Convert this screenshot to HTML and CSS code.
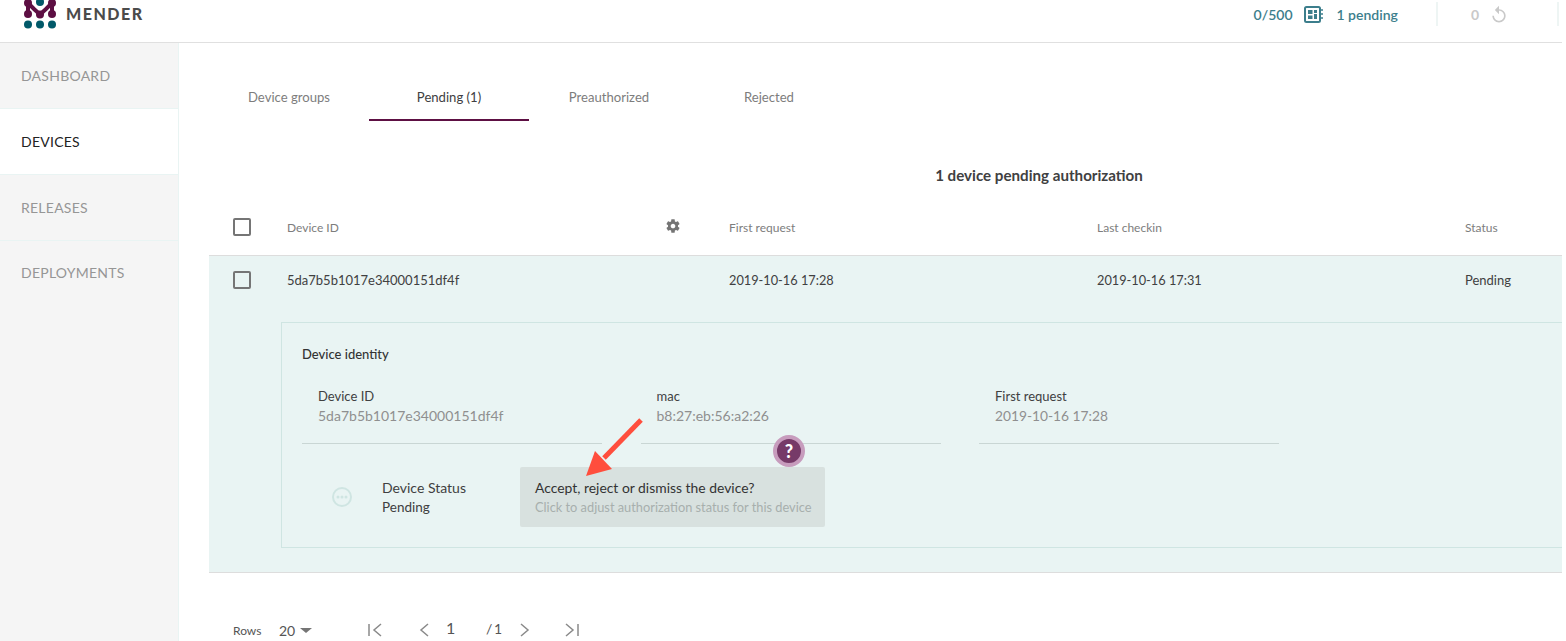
FILE: index.html
```html
<!DOCTYPE html>
<html lang="en">
<head>
<meta charset="utf-8">
<title>Mender - Devices</title>
<link rel="stylesheet" href="styles.css">
</head>
<body>
<div class="app">
  <header class="topbar">
    <div class="brand">
      <svg class="logo" width="34" height="30" viewBox="0 0 34 30">
        <circle cx="17" cy="2" r="4" fill="#015969"/>
        <circle cx="5" cy="24.5" r="4" fill="#015969"/>
        <circle cx="17" cy="24.5" r="4" fill="#015969"/>
        <circle cx="29" cy="24.5" r="4" fill="#015969"/>
        <path d="M5 3 L11 9 L17 14.5 L23 9 L29 3 M5 3 V14 M29 3 V14" fill="none" stroke="#5d0f43" stroke-width="4"/>
        <circle cx="5" cy="3" r="4" fill="#5d0f43"/>
        <circle cx="29" cy="3" r="4" fill="#5d0f43"/>
        <circle cx="5" cy="14" r="4" fill="#5d0f43"/>
        <circle cx="29" cy="14" r="4" fill="#5d0f43"/>
        <circle cx="17" cy="14.5" r="4" fill="#5d0f43"/>
      </svg>
      <span class="wordmark">MENDER</span>
    </div>
    <div class="status-bar">
      <span class="count">0/500</span>
      <svg class="chip" width="20" height="18" viewBox="0 0 20 18">
        <rect x="1" y="1" width="15" height="15" rx="1.5" fill="none" stroke="#3c7e8c" stroke-width="2"/>
        <path d="M4 4h4.5v4H4zM4 9.5h4.5V13H4zM10 4h3v3h-3zM10 8h3v5h-3z" fill="#3c7e8c"/>
        <path d="M17 4h2M17 8h2M17 12h2" stroke="#3c7e8c" stroke-width="1.4"/>
      </svg>
      <span class="pending-link">1 pending</span>
      <span class="vr vr-first"></span>
      <span class="zero">0</span>
      <svg class="replay" width="20" height="20" viewBox="0 0 24 24"><path fill="#c9c9c9" d="M12 5V1L7 6l5 5V7c3.31 0 6 2.69 6 6s-2.69 6-6 6-6-2.69-6-6H4c0 4.42 3.58 8 8 8s8-3.58 8-8-3.58-8-8-8z"/></svg>
      <span class="vr vr-last"></span>
    </div>
  </header>

  <div class="body-row">
    <nav class="sidebar">
      <a class="nav-item">Dashboard</a>
      <a class="nav-item active">Devices</a>
      <a class="nav-item">Releases</a>
      <a class="nav-item plain">Deployments</a>
    </nav>

    <main class="content">
      <div class="tabs">
        <span class="tab">Device groups</span>
        <span class="tab selected">Pending (1)</span>
        <span class="tab">Preauthorized</span>
        <span class="tab">Rejected</span>
      </div>

      <h2 class="summary">1 device pending authorization</h2>

      <div class="grid-row head-row">
        <span class="check"></span>
        <span class="cell id-cell">Device ID
          <svg class="gear" width="16" height="16" viewBox="0 0 24 24"><path fill="#757575" d="M19.43 12.98c.04-.32.07-.64.07-.98s-.03-.66-.07-.98l2.11-1.65c.19-.15.24-.42.12-.64l-2-3.46c-.12-.22-.39-.3-.61-.22l-2.49 1c-.52-.4-1.08-.73-1.69-.98l-.38-2.65C14.46 2.18 14.25 2 14 2h-4c-.25 0-.46.18-.49.42l-.38 2.65c-.61.25-1.17.59-1.69.98l-2.49-1c-.23-.09-.49 0-.61.22l-2 3.46c-.13.22-.07.49.12.64l2.11 1.65c-.04.32-.07.65-.07.98s.03.66.07.98l-2.11 1.65c-.19.15-.24.42-.12.64l2 3.46c.12.22.39.3.61.22l2.49-1c.52.4 1.08.73 1.69.98l.38 2.65c.03.24.24.42.49.42h4c.25 0 .46-.18.49-.42l.38-2.65c.61-.25 1.17-.59 1.69-.98l2.49 1c.23.09.49 0 .61-.22l2-3.46c.12-.22.07-.49-.12-.64l-2.11-1.65zM12 15.5c-1.93 0-3.5-1.57-3.5-3.5s1.57-3.5 3.5-3.5 3.5 1.57 3.5 3.5-1.57 3.5-3.5 3.5z"/></svg>
        </span>
        <span class="cell">First request</span>
        <span class="cell">Last checkin</span>
        <span class="cell">Status</span>
      </div>

      <section class="device">
        <div class="grid-row data-row">
          <span class="check"></span>
          <span class="cell">5da7b5b1017e34000151df4f</span>
          <span class="cell date">2019-10-16 17:28</span>
          <span class="cell date">2019-10-16 17:31</span>
          <span class="cell">Pending</span>
        </div>

        <div class="panel">
          <h3 class="panel-title">Device identity</h3>
          <div class="identity">
            <div class="field">
              <div class="field-key">Device ID</div>
              <div class="field-val">5da7b5b1017e34000151df4f</div>
            </div>
            <div class="field">
              <div class="field-key">mac</div>
              <div class="field-val">b8:27:eb:56:a2:26</div>
            </div>
            <div class="field">
              <div class="field-key">First request</div>
              <div class="field-val date-val">2019-10-16 17:28</div>
            </div>
          </div>
          <div class="status-row">
            <svg class="dots" width="22" height="22" viewBox="0 0 22 22">
              <circle cx="11" cy="11" r="9" fill="none" stroke="#cfe5e2" stroke-width="2"/>
              <circle cx="7" cy="11" r="1.5" fill="#cfe5e2"/>
              <circle cx="11" cy="11" r="1.5" fill="#cfe5e2"/>
              <circle cx="15" cy="11" r="1.5" fill="#cfe5e2"/>
            </svg>
            <div class="status-text">
              <div class="status-name">Device Status</div>
              <div>Pending</div>
            </div>
            <div class="action">
              <div class="action-main">Accept, reject or dismiss the device?</div>
              <div class="action-sub">Click to adjust authorization status for this device</div>
              <span class="help">?</span>
            </div>
          </div>
          <svg class="arrow" width="70" height="70" viewBox="0 0 70 70">
            <path d="M63 5 L26 43" stroke="#ff4e3d" stroke-width="5" fill="none"/>
            <path d="M8 61 L17 36 L34 54 Z" fill="#ff4e3d"/>
          </svg>
        </div>
      </section>

      <div class="pager">
        <span class="rows-label">Rows</span>
        <span class="rows-value">20</span>
        <span class="caret"></span>
        <svg class="pg pg-first" width="16" height="16" viewBox="0 0 16 16"><path d="M2 2v12M14 2L7 8l7 6" fill="none" stroke="#8a8a8a" stroke-width="1.5"/></svg>
        <svg class="pg pg-prev" width="12" height="16" viewBox="0 0 12 16"><path d="M10 2L3 8l7 6" fill="none" stroke="#8a8a8a" stroke-width="1.5"/></svg>
        <span class="page-now">1</span>
        <span class="page-total">/ 1</span>
        <svg class="pg pg-next" width="12" height="16" viewBox="0 0 12 16"><path d="M2 2l7 6-7 6" fill="none" stroke="#8a8a8a" stroke-width="1.5"/></svg>
        <svg class="pg pg-last" width="16" height="16" viewBox="0 0 16 16"><path d="M14 2v12M2 2l7 6-7 6" fill="none" stroke="#8a8a8a" stroke-width="1.5"/></svg>
      </div>
    </main>
  </div>
</div>
</body>
</html>
```

FILE: styles.css
```css
* { box-sizing: border-box; }
html, body { margin: 0; padding: 0; background: #fff; }
body { font-family: Lato, "Open Sans", sans-serif; color: #404041; overflow: hidden; }

.app { width: 1562px; height: 641px; overflow: hidden; }

.topbar {
  height: 43px;
  border-bottom: 1px solid #e0e0e0;
  display: flex;
  justify-content: space-between;
}
.brand { display: flex; align-items: flex-start; padding-left: 23px; }
.logo { display: block; }
.wordmark {
  margin-left: 9px;
  margin-top: 4px;
  font-size: 16px;
  line-height: 20px;
  font-weight: 900;
  letter-spacing: 1.5px;
  color: #4b4b4b;
}

.status-bar { display: flex; align-items: flex-start; font-size: 14px; line-height: 20px; padding-top: 2px; }
.count, .pending-link { color: #3c7e8c; font-weight: 600; margin-top: 3px; }
.chip { margin: 4px 0 0 11px; }
.pending-link { margin-left: 13px; }
.vr { width: 2px; height: 24px; background: #eef5f4; }
.vr-first { margin-left: 38px; }
.zero { margin: 3px 0 0 33px; color: #c9c9c9; font-weight: 700; }
.replay { margin: 3px 0 0 10px; }
.vr-last { margin-left: 48px; margin-right: 3px; }

.body-row { display: flex; height: 598px; }

.sidebar {
  width: 179px;
  flex: none;
  background: #f5f5f5;
  border-right: 1px solid #e9f4f3;
}
.nav-item {
  display: flex;
  align-items: center;
  height: 66px;
  padding-left: 21px;
  font-size: 14px;
  letter-spacing: .25px;
  text-transform: uppercase;
  color: #969696;
  border-bottom: 1px solid #e9f4f3;
}
.nav-item.active { background: #fff; color: #222; }
.nav-item.plain { border-bottom: 0; height: 62px; }

.content { flex: 1; min-width: 0; padding: 30px 0 0 30px; }

.tabs { display: flex; height: 48px; }
.tab {
  width: 160px;
  display: flex;
  align-items: center;
  justify-content: center;
  padding-top: 1px;
  font-size: 13.1px;
  color: #7d7d7d;
  border-bottom: 2px solid transparent;
}
.tab.selected { color: #404041; border-bottom-color: #5d0f43; }

.summary {
  margin: 44px 0 0;
  padding-left: 307px;
  width: 1353px;
  text-align: center;
  font-size: 15.15px;
  line-height: 20px;
  font-weight: 700;
  color: #404041;
}

.grid-row {
  display: grid;
  grid-template-columns: 78px 442px 368px 368px 97px;
  align-items: center;
}
.head-row {
  margin-top: 15px;
  height: 56px;
  border-bottom: 1px solid #ddd;
  font-size: 12px;
  color: #7d7d7d;
  padding-bottom: 1px;
}
.data-row { height: 47px; font-size: 13px; color: #404041; }
.date { font-size: 12.75px; }
.check {
  width: 18px;
  height: 18px;
  margin-left: 24px;
  border: 2px solid #757575;
  border-radius: 2px;
}
.id-cell { display: flex; justify-content: space-between; align-items: center; padding-right: 48px; }
.gear { display: block; margin-top: -2px; }

.device {
  background: #e9f4f3;
  height: 317px;
  border-bottom: 1px solid #ddd;
}

.panel {
  position: relative;
  margin: 19px 0 0 72px;
  height: 226px;
  width: 1290px;
  border: 1px solid #cfe5e2;
  border-right: 0;
  padding: 20px 0 0 20px;
}
.panel-title { margin: 0; font-size: 13px; line-height: 22px; font-weight: 500; color: #333; }

.identity { display: flex; gap: 38.5px; margin-top: 21px; }
.field {
  width: 300px;
  height: 58px;
  padding: 0 16px;
  border-bottom: 1px solid #c9d6d4;
  font-size: 14px;
  line-height: 20px;
}
.field-key { font-size: 13px; color: #404041; }
.field-val { color: #8f8f8f; font-size: 14px; }
.field-val.date-val { font-size: 13.75px; }

.status-row { display: flex; align-items: center; margin-top: 23px; height: 60px; padding-left: 29px; }
.dots { flex: none; }
.status-text { margin-left: 29px; width: 138px; padding-top: 1px; font-size: 13.5px; line-height: 19px; color: #404041; }
.status-name { font-size: 14px; margin-bottom: 1px; }

.action {
  position: relative;
  width: 305px;
  height: 60px;
  padding: 11px 0 0 15px;
  background: #d8e1df;
  border-radius: 2px;
  line-height: 19px;
}
.action-main { font-size: 13.9px; color: #333; margin-bottom: 1px; }
.action-sub { font-size: 12.8px; color: #a7afad; white-space: nowrap; }

.help {
  position: absolute;
  left: 253px;
  top: -32px;
  width: 32px;
  height: 32px;
  border-radius: 50%;
  border: 4px solid #c79cbd;
  background: #763a68;
  color: #fff;
  font-size: 18px;
  font-weight: 900;
  line-height: 24px;
  text-align: center;
}

.arrow { position: absolute; left: 296px; top: 92px; }

.pager { display: flex; align-items: center; height: 20px; margin-top: 47px; padding-left: 24px; color: #555; }
.rows-label { font-size: 12px; width: 46px; }
.rows-value { font-size: 14px; width: 21px; }
.caret {
  width: 0;
  height: 0;
  border-left: 6px solid transparent;
  border-right: 6px solid transparent;
  border-top: 5px solid #757575;
  margin-right: 55px;
}
.pg { display: block; flex: none; }
.pg-first { margin-right: 35px; }
.pg-prev { margin-right: 16px; }
.page-now { font-size: 16px; width: 40px; margin-top: -5px; }
.page-total { font-size: 14px; width: 33px; margin-top: -3px; word-spacing: -2px; }
.pg-next { margin-right: 33px; }
```
